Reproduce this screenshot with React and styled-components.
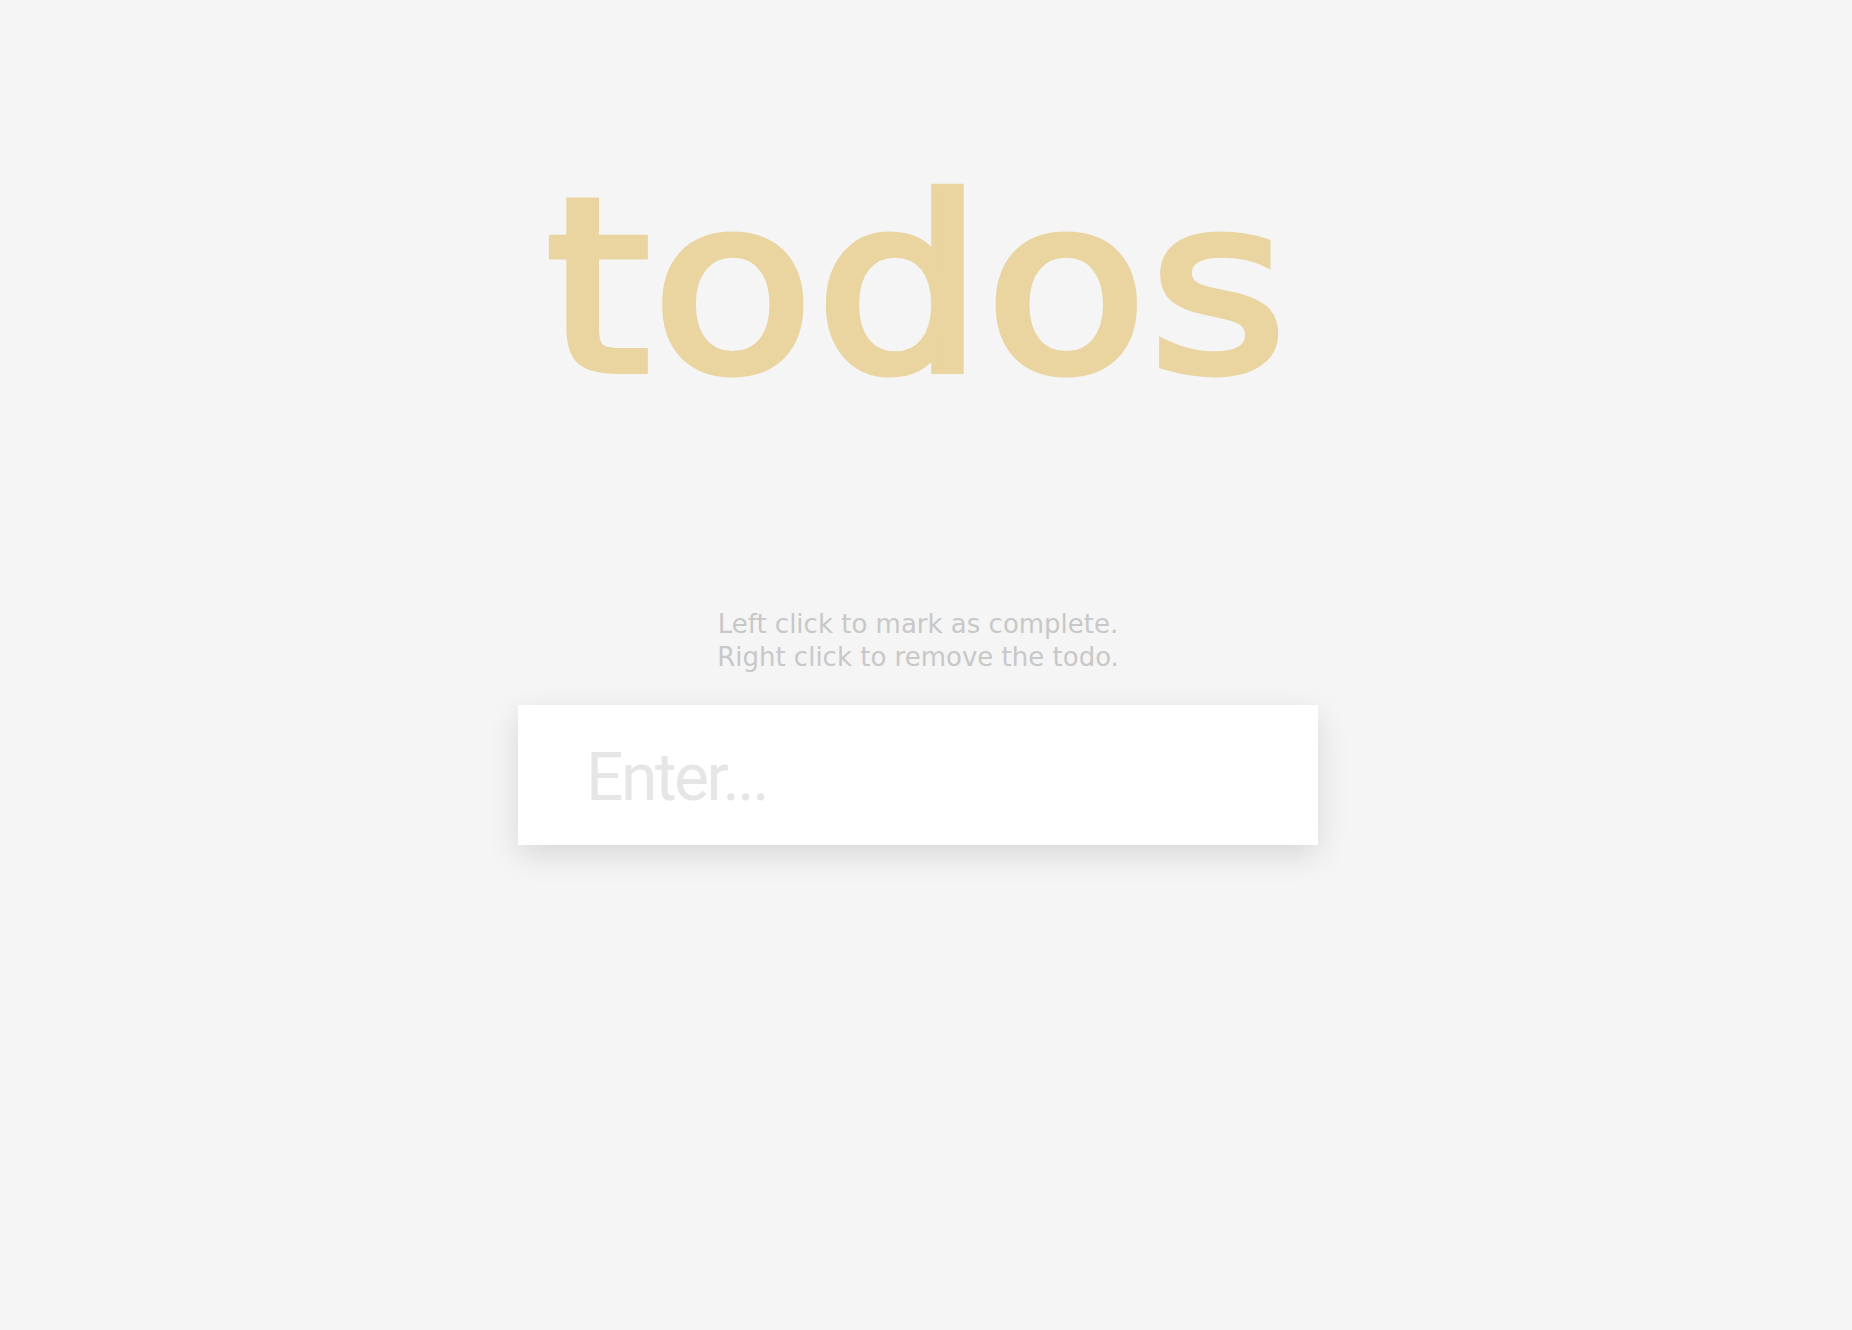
import React from 'react'
import styled, { createGlobalStyle } from 'styled-components'

const GlobalStyle = createGlobalStyle`
  html, body {
    margin: 0;
    padding: 0;
    background: #f5f5f5;
  }
  body {
    min-height: 1330px;
    padding-right: 16px;
    font-family: 'DejaVu Sans', sans-serif;
  }
`

const Page = styled.main`
  width: 800px;
  margin: 0 auto;
  padding-top: 167px;
  display: flex;
  flex-direction: column;
  align-items: center;
`

// wide geometric title, DejaVu stretched a little to approximate the original face
const Title = styled.h1`
  margin: 0;
  font-family: 'DejaVu Sans', sans-serif;
  font-weight: 400;
  font-size: 240px;
  line-height: 240px;
  letter-spacing: 2px;
  color: #ead5a0;
  -webkit-text-stroke: 8px #ead5a0;
  transform: scaleX(1.1);
  user-select: none;
`

const Hint = styled.p`
  margin: 201px 0 0;
  font-family: 'DejaVu Sans', sans-serif;
  font-size: 26px;
  line-height: 33px;
  color: #c8c8c8;
  text-align: center;
`

const Form = styled.form`
  align-self: stretch;
  margin-top: 31px;
  background: #fff;
  box-shadow: 0 10px 30px rgba(0, 0, 0, 0.12);
`

const Input = styled.input`
  display: block;
  box-sizing: border-box;
  width: 100%;
  height: 140px;
  padding: 4px 40px 0 68px;
  border: none;
  outline: none;
  background: transparent;
  font-family: Roboto, 'Liberation Sans', sans-serif;
  font-size: 66px;
  letter-spacing: -2.5px;
  color: #555;

  &::placeholder {
    color: #e6e6e6;
  }
`

export default function App() {
  return (
    <>
      <GlobalStyle />
      <Page>
        <Title>todos</Title>
        <Hint>
          Left click to mark as complete.
          <br />
          Right click to remove the todo.
        </Hint>
        <Form onSubmit={(e) => e.preventDefault()}>
          <Input placeholder="Enter..." autoComplete="off" />
        </Form>
      </Page>
    </>
  )
}
